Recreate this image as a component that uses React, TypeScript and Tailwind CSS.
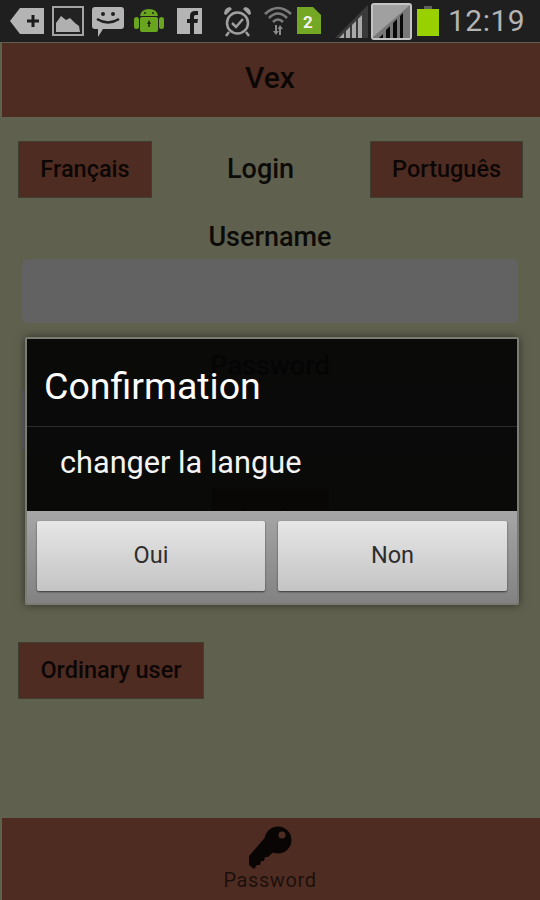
const font = "font-['Roboto',sans-serif]";

function AddTag() {
  return (
    <svg width="34" height="28" viewBox="0 0 34 28">
      <path d="M10 1H34V27H10L0 14Z" fill="#b4b4b4" />
      <path d="M21.5 8h3v4.5H29v3h-4.5V20h-3v-4.5H17v-3h4.5z" fill="#1c1c1c" />
    </svg>
  );
}

function Gallery() {
  return (
    <svg width="32" height="30" viewBox="0 0 32 30">
      <rect x="1" y="1" width="30" height="28" fill="none" stroke="#a4a4a4" strokeWidth="2" />
      <rect x="3" y="3" width="26" height="24" fill="#222" />
      <path d="M4 26V17L9 10L14 14L18 12L23 17L27 20L28 26Z" fill="#b0b0b0" />
    </svg>
  );
}

function Smiley() {
  return (
    <svg width="32" height="31" viewBox="0 0 32 31">
      <path d="M3 1H29Q32 1 32 4V20Q32 23 29 23H11L6 31V23H3Q0 23 0 20V4Q0 1 3 1Z" fill="#b4b4b4" />
      <circle cx="11" cy="8" r="2" fill="#222" />
      <circle cx="21" cy="8" r="2" fill="#222" />
      <path d="M5 13Q16 20 27 13" fill="none" stroke="#222" strokeWidth="2.5" />
    </svg>
  );
}

function AndroidBot() {
  return (
    <svg width="30" height="26" viewBox="0 0 30 26">
      <rect x="0" y="9" width="5" height="12" rx="2.5" fill="#6aa51f" />
      <rect x="25" y="9" width="5" height="12" rx="2.5" fill="#6aa51f" />
      <path d="M6 8Q7 1 15 1Q23 1 24 8Z" fill="#6aa51f" />
      <rect x="6" y="9" width="18" height="15" rx="2" fill="#6aa51f" />
      <circle cx="11" cy="5" r="1" fill="#222" />
      <circle cx="19" cy="5" r="1" fill="#222" />
      <path d="M15 12l2 4h-1.2v3h-1.6v-3H13z" fill="#1c2a0c" />
    </svg>
  );
}

function Facebook() {
  return (
    <svg width="25" height="26" viewBox="0 0 25 26">
      <rect width="25" height="26" fill="#b4b4b4" />
      <path d="M13 26V15H10V11H13V8Q13 3 18 3H21V7H18.5Q17 7 17 8.5V11H21L20.4 15H17V26Z" fill="#1c1c1c" />
    </svg>
  );
}

function Alarm() {
  return (
    <svg width="29" height="31" viewBox="0 0 29 31">
      <circle cx="14.5" cy="17" r="10.5" fill="none" stroke="#a0a0a0" strokeWidth="2.5" />
      <path d="M1 8Q1 2 7 1L9 3L3 9Z" fill="#a0a0a0" />
      <path d="M28 8Q28 2 22 1L20 3L26 9Z" fill="#a0a0a0" />
      <path d="M9 17L13 21L20 13" fill="none" stroke="#a0a0a0" strokeWidth="2.5" />
      <path d="M6 26L3 30M23 26L26 30" stroke="#a0a0a0" strokeWidth="2.5" />
    </svg>
  );
}

function Wifi() {
  return (
    <svg width="28" height="32" viewBox="0 0 28 32">
      <path d="M1 9Q14 -3 27 9M5 13Q14 4 23 13M9 17Q14 12 19 17" fill="none" stroke="#7c7c7c" strokeWidth="2.5" />
      <path d="M11 20h2v6h2l-3 4-3-4h2z" fill="#8a8a8a" />
      <path d="M17 30h-2v-6h-1.5l2.5-4 3 4h-2z" fill="#8a8a8a" />
    </svg>
  );
}

function Sim() {
  return (
    <svg width="25" height="28" viewBox="0 0 25 28">
      <path d="M1 0H17L25 8V27H1Z" fill="#74a824" />
      <text x="12" y="21" textAnchor="middle" fontSize="17" fontWeight="700" fontFamily="Roboto, sans-serif" fill="#f2f2f2">
        2
      </text>
    </svg>
  );
}

function SignalA() {
  return (
    <svg width="33" height="33" viewBox="0 0 33 33">
      <path d="M33 0V33H0Z" fill="#3a3a3a" />
      <path d="M4 33L9 28V33ZM11 33V26L15 22V33ZM17 33V20L21 16V33ZM23 33V14L27 10V33Z" fill="#a8a8a8" />
    </svg>
  );
}

function SignalB() {
  return (
    <div className="flex h-[37px] w-[41px] items-end justify-center rounded-[3px] border-2 border-[#c4c4c4] bg-[#a0a0a0]">
      <svg width="37" height="33" viewBox="0 0 37 33">
        <path d="M37 0V33H0V32Z" fill="#787878" />
        <path d="M6 33L10 29V33ZM13 33V25L17 21V33ZM20 33V18L24 14V33ZM27 33V11L30 8V33Z" fill="#0a0a0a" />
      </svg>
    </div>
  );
}

function Battery() {
  return (
    <div className="flex flex-col items-center">
      <div className="h-[3px] w-[8px] bg-[#5e5e5e]" />
      <div className="h-[27px] w-[22px] bg-[#98d000]" />
    </div>
  );
}

function Key() {
  return (
    <svg width="44" height="43" viewBox="0 0 44 43">
      <circle cx="30" cy="14" r="13.5" fill="#0a0505" />
      <path d="M20 8L1 30L1 39L6 43L9 39L12 39L13 35L16 35L17 31L20 31L30 22Z" fill="#0a0505" />
      <circle cx="34" cy="9" r="3.5" fill="#4f2c22" />
    </svg>
  );
}

function BrownButton({ label, className }: { label: string; className: string }) {
  return (
    <button
      type="button"
      className={`flex h-[57px] items-center justify-center border border-[#3e3e32] bg-[#4f2c22] text-[23.5px] font-medium text-[#0c0705] ${className}`}
    >
      {label}
    </button>
  );
}

function FormInput() {
  return <div className="mx-[22px] h-[64px] rounded-[6px] bg-[#626262]" />;
}

export default function App() {
  return (
    <div className={`relative flex h-[900px] w-[540px] flex-col overflow-hidden bg-[#5f604e] ${font}`}>
      <div className="flex h-[42px] items-center bg-[#1f1f1f] pl-[10px]">
        <AddTag />
        <div className="ml-[8px]"><Gallery /></div>
        <div className="ml-[8px]"><Smiley /></div>
        <div className="ml-[10px]"><AndroidBot /></div>
        <div className="ml-[13px]"><Facebook /></div>
        <div className="ml-[21px]"><Alarm /></div>
        <div className="ml-[12px]"><Wifi /></div>
        <div className="ml-[4px]"><Sim /></div>
        <div className="ml-[14px]"><SignalA /></div>
        <div className="ml-[3px]"><SignalB /></div>
        <div className="ml-[5px]"><Battery /></div>
        <span className="ml-[9px] text-[30px] leading-none tracking-[0.5px] text-[#b4b4b4]">12:19</span>
      </div>

      <header className="mt-px flex h-[74px] items-center justify-center border-l-2 border-[#5f604e] bg-[#4f2c22] pr-[2px] pb-[5px] text-[30px] font-medium text-[#0c0705]">
        Vex
      </header>

      <main className="flex flex-1 flex-col text-[#0c0b08]">
        <div className="mt-[24px] flex items-center pl-[18px]">
          <BrownButton label="Français" className="w-[134px]" />
          <span className="ml-[75px] text-[27px] font-medium">Login</span>
          <BrownButton label="Português" className="ml-[76px] w-[153px]" />
        </div>
        <div className="mt-[21px] h-[36px] text-center text-[27px] leading-[36px] font-medium">Username</div>
        <div className="mt-[4px]"><FormInput /></div>
        <div className="mt-[25px] h-[36px] text-center text-[27px] leading-[36px] font-medium">Password</div>
        <div className="mt-[4px]"><FormInput /></div>
        <div className="mt-[36px] flex justify-center">
          <BrownButton label="Login" className="w-[118px]" />
        </div>
        <div className="mt-[97px] pl-[18px]">
          <BrownButton label="Ordinary user" className="w-[186px]" />
        </div>
      </main>

      <footer className="flex h-[82px] flex-col items-center border-l-2 border-[#5f604e] bg-[#4f2c22] pt-[8px] pr-[2px]">
        <Key />
        <span className="text-[20px] leading-[22px] tracking-[0.6px] text-[#1c100c]">Password</span>
      </footer>

      <div className="absolute top-[337px] left-[25px] w-[494px] rounded-[2px] border-2 border-[#7c7c72] shadow-[0_0_8px_rgba(0,0,0,0.5)]">
        <div className="bg-[#050505]/95">
          <div className="flex h-[88px] items-center border-b border-[#2a2a2a] pt-[8px] pl-[17px] text-[37.5px] text-white">
            Confirmation
          </div>
          <div className="flex h-[84px] items-start pt-[16px] pl-[33px] text-[30.7px] leading-[40px] text-[#f4f4f4]">
            changer la langue
          </div>
        </div>
        <div className="flex h-[92px] items-start gap-[13px] bg-gradient-to-b from-[#a6a6a6] to-[#828282] pt-[10px] pl-[10px]">
          <button type="button" className="h-[70px] w-[228px] rounded-[2px] bg-gradient-to-b from-[#e6e6e6] to-[#c4c4c4] text-[23.5px] text-[#2e2e2e] shadow-[0_1px_2px_rgba(0,0,0,0.6)]">
            Oui
          </button>
          <button type="button" className="h-[70px] w-[229px] rounded-[2px] bg-gradient-to-b from-[#e6e6e6] to-[#c4c4c4] text-[23.5px] text-[#2e2e2e] shadow-[0_1px_2px_rgba(0,0,0,0.6)]">
            Non
          </button>
        </div>
      </div>
    </div>
  );
}
